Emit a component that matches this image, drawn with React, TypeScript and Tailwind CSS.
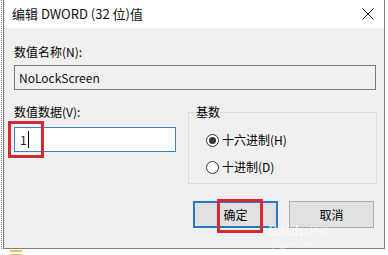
import React from 'react';

const font = { fontFamily: '"Noto Sans CJK SC", "Noto Sans", sans-serif' };

const Radio = ({ checked, label }: { checked?: boolean; label: string }) => (
  <div className="flex items-center h-[16px]">
    <span className="w-[13px] h-[13px] rounded-full border border-[#333333] bg-white flex items-center justify-center">
      {checked && <span className="w-[7px] h-[7px] rounded-full bg-[#333333]" />}
    </span>
    <span className="ml-[3px] text-[12px] leading-[16px] text-black">{label}</span>
  </div>
);

const App: React.FC = () => {
  return (
    <div className="relative w-[388px] h-[255px] bg-white overflow-hidden flex" style={font}>
      {/* background tree lines behind the dialog */}
      <div className="w-[3px] h-[249px] border-l border-dotted border-[#8c8c8c] ml-[1px] shrink-0" />

      <div className="w-[382px] h-[249px] shrink-0 -ml-[1px] flex flex-col bg-[#f0f0f0] border-l border-r border-b border-[#7d7d7d]">
        {/* title bar */}
        <div className="h-[28px] bg-white flex items-center justify-between pl-[8px] pr-[8px]">
          <span className="text-[13px] leading-[16px] text-[#111]">编辑 DWORD (32 位)值</span>
          <svg width="12" height="12" viewBox="0 0 12 12" className="mr-[2px]">
            <path d="M0.5 0.5 L11.5 11.5 M11.5 0.5 L0.5 11.5" stroke="#111" strokeWidth="1" />
          </svg>
        </div>

        {/* body */}
        <div className="flex flex-col pl-[10px] pt-[16px]">
          <div className="text-[12px] leading-[16px] text-black">数值名称(N):</div>
          <div className="mt-[5px] w-[362px] h-[25px] border border-[#7a7a7a] bg-[#f0f0f0] flex items-center pl-[4px] text-[12px] text-[#111]">
            NoLockScreen
          </div>

          <div className="flex mt-[14px]">
            <div className="w-[162px] flex flex-col">
              <div className="text-[12px] leading-[16px] text-black">数值数据(V):</div>
              <div className="mt-[7px] w-[162px] h-[25px] border border-[#3b82c4] bg-white flex items-center pl-[5px] text-[12px] text-[#222]">
                1<span className="ml-[1px] w-[1px] h-[17px] bg-black" />
              </div>
            </div>

            <fieldset className="ml-[12px] mt-[1px] w-[189px] h-[79px] border border-[#dcdcdc] px-[8px]">
              <legend className="text-[12px] leading-[14px] px-0 -ml-[1px] text-black">基数</legend>
              <div className="flex flex-col gap-[11px] mt-[13px] pl-[9px]">
                <Radio checked label="十六进制(H)" />
                <Radio label="十进制(D)" />
              </div>
            </fieldset>
          </div>

          <div className="flex mt-[17px] pl-[179px] gap-[11px]">
            <button className="w-[85px] h-[27px] border-2 border-[#2a78c2] bg-[#e1e1e1] text-[12px] text-black">确定</button>
            <button className="w-[85px] h-[27px] border border-[#adadad] bg-[#e1e1e1] text-[12px] text-black">取消</button>
          </div>
        </div>
      </div>

      {/* bottom background strip pieces */}
      <div className="absolute left-[10px] top-[250px] w-[12px] h-[2px] bg-[#d8c07a]" />
      <div className="absolute left-[10px] top-[254px] w-[12px] h-[1px] bg-[#e0c88a]" />

      {/* watermark */}
      <div className="absolute left-[268px] top-[223px] h-[15px] flex items-end text-white/60 font-bold leading-[15px]">
        <span className="text-[14px]">Bai</span>
        <span className="text-[14px]">du</span>
        <span className="text-[10px] font-normal ml-[1px]">经验</span>
      </div>
      <div className="absolute left-[272px] top-[241px] text-[7px] leading-[7px] text-white/60">jingyan.baidu.com</div>

      {/* red annotation boxes */}
      <div className="absolute left-[8px] top-[121px] w-[36px] h-[37px] border-[3px] border-[#d22b36]" />
      <div className="absolute left-[217px] top-[199px] w-[46px] h-[34px] border-[3px] border-[#d22b36]" />
    </div>
  );
};

export default App;
